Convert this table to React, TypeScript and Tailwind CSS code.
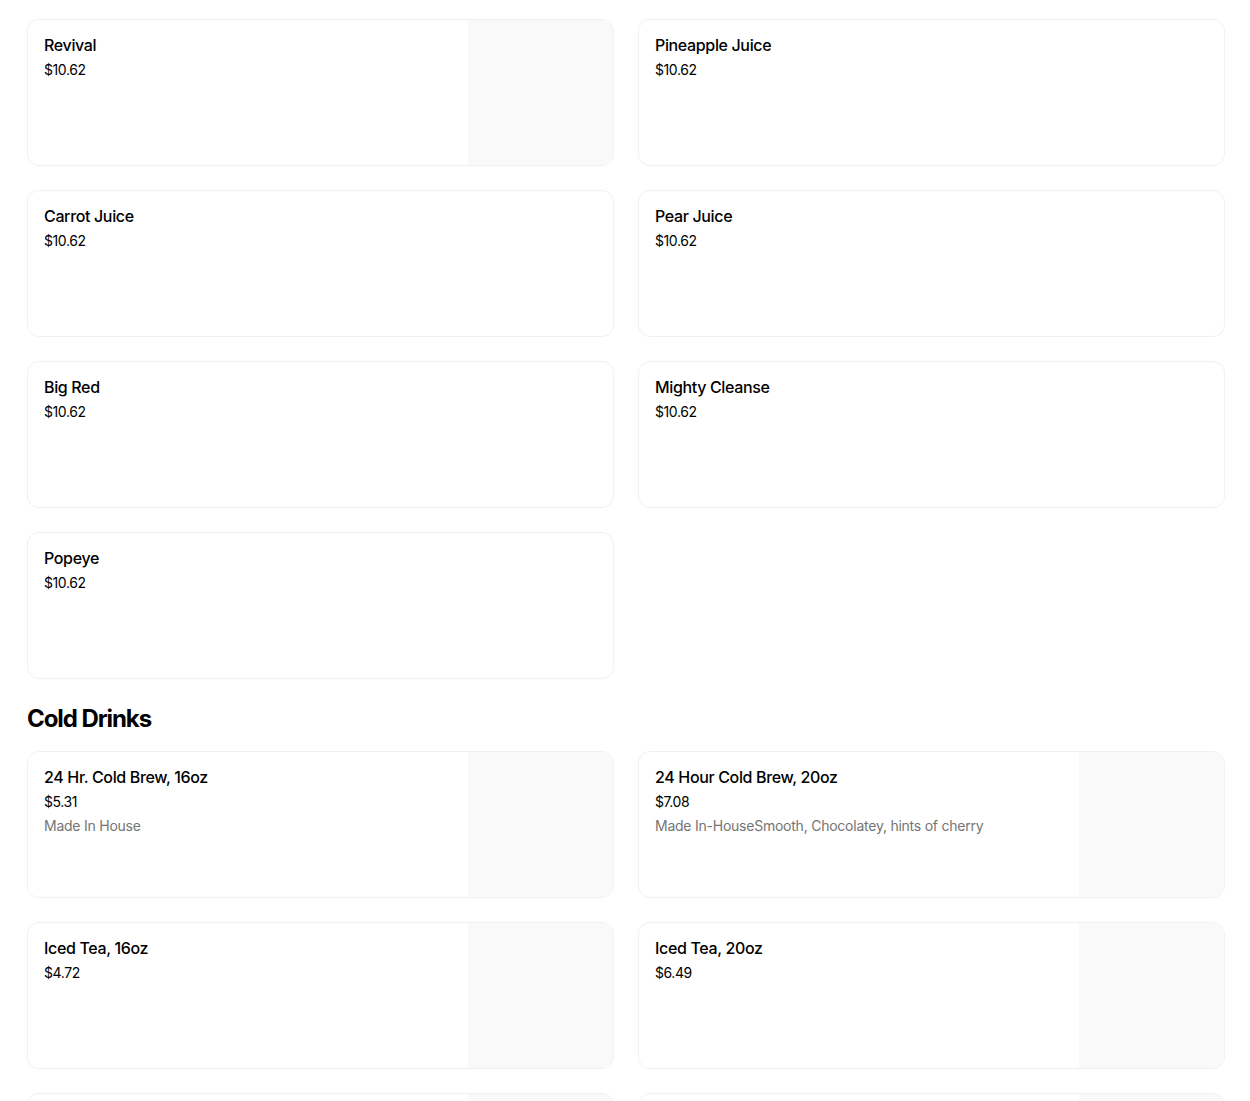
type Item = { name: string; price: string; desc?: string; image?: boolean }

const juices: Item[] = [
  { name: 'Revival', price: '$10.62', image: true },
  { name: 'Pineapple Juice', price: '$10.62' },
  { name: 'Carrot Juice', price: '$10.62' },
  { name: 'Pear Juice', price: '$10.62' },
  { name: 'Big Red', price: '$10.62' },
  { name: 'Mighty Cleanse', price: '$10.62' },
  { name: 'Popeye', price: '$10.62' },
]

const coldDrinks: Item[] = [
  { name: '24 Hr. Cold Brew, 16oz', price: '$5.31', desc: 'Made In House', image: true },
  {
    name: '24 Hour Cold Brew, 20oz',
    price: '$7.08',
    desc: 'Made In-HouseSmooth, Chocolatey, hints of cherry',
    image: true,
  },
  { name: 'Iced Tea, 16oz', price: '$4.72', image: true },
  { name: 'Iced Tea, 20oz', price: '$6.49', image: true },
  { name: 'Arnold Palmer, 16oz', price: '$4.72', image: true },
  { name: 'Arnold Palmer, 20oz', price: '$6.49', image: true },
]

const MenuCard = ({ item }: { item: Item }) => (
  <div className="flex h-[147px] overflow-hidden rounded-xl border border-[#f1f1f1] bg-white">
    <div className="flex-1 px-4 pt-[15px]">
      <div className="text-[16px] leading-5 font-medium tracking-[-0.022em] text-black">{item.name}</div>
      <div className="mt-[5px] text-[14px] leading-5 tracking-[-0.03em] text-black">{item.price}</div>
      {item.desc && (
        <div className="mt-1 text-[14px] leading-5 tracking-[-0.017em] text-[#757575]">{item.desc}</div>
      )}
    </div>
    {item.image && <div className="w-[145px] shrink-0 bg-[#f9f9f9]" />}
  </div>
)

export default function App() {
  return (
    <div
      className="min-h-screen bg-white pt-[19px] pr-[25px] pl-[27px]"
      style={{ fontFamily: 'Inter, "Noto Sans", sans-serif' }}
    >
      <div className="grid grid-cols-2 gap-6">
        {juices.map((item) => (
          <MenuCard key={item.name} item={item} />
        ))}
      </div>

      <h2 className="mt-6 mb-4 text-[24px] leading-8 font-bold tracking-[-0.045em] text-black">
        Cold Drinks
      </h2>

      <div className="grid grid-cols-2 gap-6">
        {coldDrinks.map((item) => (
          <MenuCard key={item.name} item={item} />
        ))}
      </div>
    </div>
  )
}
